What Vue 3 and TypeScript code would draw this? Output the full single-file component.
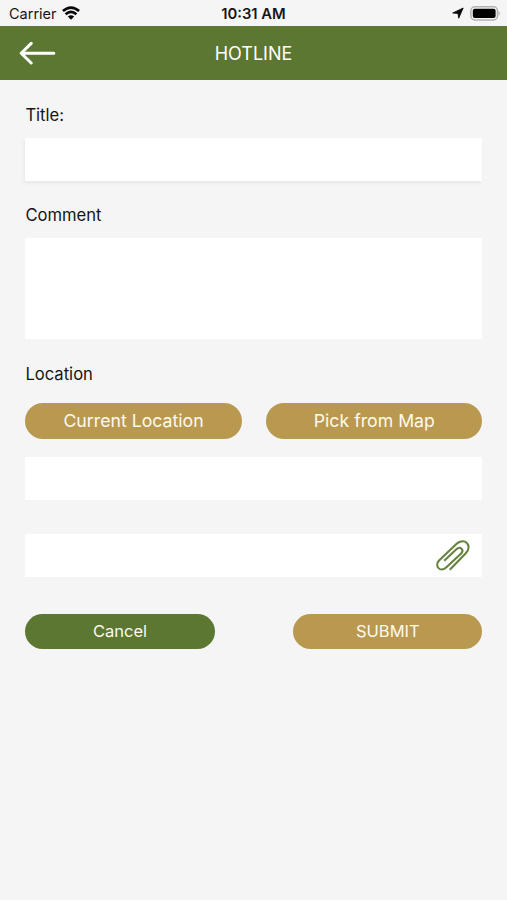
<script setup lang="ts">
import { ref } from 'vue'

const title = ref<string>('')
const comment = ref<string>('')
const address = ref<string>('')
const attachment = ref<string>('')
</script>

<template>
  <main class="screen">
    <div class="status">
      <div class="carrier">
        <span>Carrier</span>
        <svg class="wifi" width="18" height="14" viewBox="0 0 18 14" aria-hidden="true">
          <g fill="none" stroke="#080808" stroke-width="2.7">
            <path d="M.9 5.1Q9-1.9 17.1 5.1" />
            <path d="M3.6 8.3Q9 3.6 14.4 8.3" />
          </g>
          <path d="M5.8 10.5Q9 7.9 12.2 10.5L9 13.8Z" fill="#080808" />
        </svg>
      </div>
      <span class="time">10:31 AM</span>
      <div class="indicators">
        <svg width="12" height="12" viewBox="0 0 12 12" aria-hidden="true">
          <path d="M11.2 1 6.7 11.2 6 6.5.7 6Z" fill="#080808" stroke="#080808" stroke-width=".8" stroke-linejoin="round" />
        </svg>
        <svg width="31" height="15" viewBox="0 0 31 15" aria-hidden="true">
          <rect x=".9" y=".8" width="26.6" height="13.2" rx="4" fill="#f5f5f5" stroke="#b2b2b2" stroke-width="1.5" />
          <rect x="2.8" y="2.8" width="22.8" height="9.3" rx="2" fill="#000" />
          <path d="M28.6 5.1Q31 7.4 28.6 9.7Z" fill="#aaa" />
        </svg>
      </div>
    </div>

    <header class="header">
      <button class="back" type="button" aria-label="Back">
        <svg width="38" height="24" viewBox="0 0 38 24" aria-hidden="true">
          <path d="M13.2 2.4 3.2 12.2 13.2 22M3.4 12.2H35.8" fill="none" stroke="#fff" stroke-width="3" stroke-linecap="round" stroke-linejoin="round" />
        </svg>
      </button>
      <h1>HOTLINE</h1>
    </header>

    <form class="form" @submit.prevent>
      <label class="label label-title" for="title">Title:</label>
      <input id="title" v-model="title" class="field raised" type="text" />
      <label class="label label-comment" for="comment">Comment</label>
      <textarea id="comment" v-model="comment" class="field comment"></textarea>
      <label class="label label-location" for="address">Location</label>
      <div class="row pickers">
        <button class="pill gold large" type="button">Current Location</button>
        <button class="pill gold large" type="button">Pick from Map</button>
      </div>
      <input id="address" v-model="address" class="field" type="text" />
      <div class="field attachment">
        <input v-model="attachment" class="bare" type="text" />
        <svg width="44" height="42" viewBox="0 0 44 42" aria-hidden="true">
          <path d="M12.2 26.7 24.6 15.1C28.4 11.8 32.4 15.9 29.2 19.5L14.4 33.3C8.4 39 1.8 32.1 7.3 26.3L24.4 9.9C32.4 2.7 41.2 11.5 33.8 19.3L17.8 35.8" fill="none" stroke="#65823f" stroke-width="2.1" stroke-linejoin="round" />
        </svg>
      </div>
      <div class="row actions">
        <button class="pill green" type="button">Cancel</button>
        <button class="pill gold" type="submit">SUBMIT</button>
      </div>
    </form>
  </main>
</template>

<style>
body {
  background: #f5f5f5;
}
</style>

<style scoped>
.screen {
  min-height: 900px;
  background: #f5f5f5;
  color: #151515;
  font-family: Inter, "Liberation Sans", sans-serif;
}
.screen * {
  box-sizing: border-box;
}
.status {
  display: grid;
  grid-template-columns: 1fr auto 1fr;
  align-items: center;
  height: 25.5px;
  padding: 1px 6px 0 9px;
}
.carrier {
  display: flex;
  align-items: center;
  gap: 5px;
  font-size: 14.5px;
}
.wifi {
  margin-top: -1px;
}
.time {
  margin-right: 3px;
  padding-top: 2px;
  font-size: 14.8px;
  font-weight: 600;
}
.indicators {
  display: flex;
  align-items: center;
  justify-content: flex-end;
  gap: 6px;
}
.header {
  display: grid;
  grid-template-columns: 60px 1fr 60px;
  align-items: center;
  height: 54.5px;
  background: #5c7731;
  color: #fff;
}
.back {
  display: flex;
  padding: 0 0 0 18px;
  border: 0;
  background: none;
}
h1 {
  margin: 0;
  padding-top: 2px;
  font-size: 18px;
  font-weight: 400;
  line-height: 24px;
  text-align: center;
}
.form {
  display: flex;
  flex-direction: column;
  padding: 24px 25px 0 25.4px;
}
.label {
  height: 22px;
  font-size: 16.6px;
  line-height: 23px;
}
.label-title {
  margin-bottom: 12px;
}
.label-comment {
  margin: 23.5px 0 12px;
}
.label-location {
  margin: 23.5px 0 18px;
  line-height: 22px;
}
.field {
  display: block;
  width: 456.6px;
  height: 43px;
  margin: 0;
  padding: 0 10px;
  border: 0;
  border-radius: 0;
  background: #fff;
  font: inherit;
  font-size: 16px;
  outline: none;
  resize: none;
}
.raised {
  height: 42.5px;
  box-shadow: -1px 2px 3px #e7e7e7;
}
.comment {
  height: 101px;
}
.row {
  display: flex;
  justify-content: space-between;
  width: 457.1px;
}
.pickers {
  margin-bottom: 18px;
}
.pill {
  width: 189.3px;
  height: 35.5px;
  padding: 0;
  border: 0;
  border-radius: 18px;
  color: #fff9ed;
  font: inherit;
  font-size: 16.5px;
  line-height: 35px;
}
.large {
  width: 216.3px;
  height: 36.5px;
  border-radius: 18.5px;
  font-size: 17.7px;
}
.gold {
  background: #b99950;
}
.green {
  background: #5c7731;
}
.attachment {
  display: flex;
  align-items: center;
  margin: 33.8px 0 37px;
  padding-right: 6px;
}
.bare {
  flex: 1;
  min-width: 0;
  height: 100%;
  padding: 0;
  border: 0;
  background: none;
  font: inherit;
  outline: none;
}
</style>
